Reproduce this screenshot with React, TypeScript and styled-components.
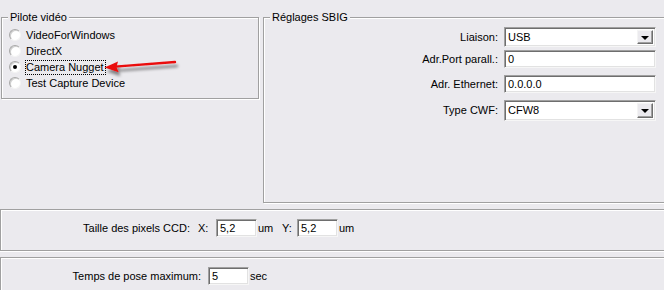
import React from 'react'
import styled, { createGlobalStyle } from 'styled-components'

const GlobalStyle = createGlobalStyle`
  html, body {
    margin: 0;
    padding: 0;
    background: #ebeaee;
  }
  body {
    font-family: 'Liberation Sans', Arial, sans-serif;
    font-size: 11px;
    color: #000;
  }
`

const Window = styled.div`
  position: relative;
  width: 664px;
  height: 290px;
  overflow: hidden;
  background: #ebeaee;
  font-family: 'Liberation Sans', Arial, sans-serif;
  font-size: 11px;
  line-height: 13px;
`

const TopRow = styled.div`
  display: flex;
  align-items: flex-start;
  padding-top: 17px;
`

interface GroupProps {
  $w: number
  $h: number
  $ml: number
}

const Group = styled.div<GroupProps>`
  position: relative;
  flex: none;
  box-sizing: border-box;
  width: ${({ $w }) => $w}px;
  height: ${({ $h }) => $h}px;
  margin-left: ${({ $ml }) => $ml}px;
  border: 1px solid #a0a0a0;
  box-shadow: inset 1px 1px 0 #fff, 1px 1px 0 #fff;
`

const Caption = styled.span`
  position: absolute;
  top: -7px;
  left: 6px;
  padding: 0 2px;
  line-height: 13px;
  background: #ebeaee;
  white-space: nowrap;
`

const RadioList = styled.div`
  display: flex;
  flex-direction: column;
  padding: 9px 0 0 7px;
`

const RadioRow = styled.label`
  display: flex;
  align-items: center;
  height: 16px;
  gap: 4px;
`

const RadioCircle = styled.span<{ $checked?: boolean }>`
  position: relative;
  box-sizing: border-box;
  width: 12px;
  height: 12px;
  border-radius: 50%;
  background: #fff;
  border: 1px solid;
  border-color: #a8a8a8 #f4f4f4 #f4f4f4 #a8a8a8;
  box-shadow: inset 1px 1px 0 #d0d0d0;
  &::after {
    content: '';
    display: ${({ $checked }) => ($checked ? 'block' : 'none')};
    position: absolute;
    left: 3px;
    top: 3px;
    width: 4px;
    height: 4px;
    border-radius: 50%;
    background: #000;
  }
`

const RadioText = styled.span<{ $focus?: boolean }>`
  border: 1px ${({ $focus }) => ($focus ? 'dotted #000' : 'solid transparent')};
  padding: 0 1px 0 0;
  line-height: 13px;
  white-space: nowrap;
`

const FormGrid = styled.div`
  display: grid;
  grid-template-columns: 234px 152px;
  column-gap: 6px;
  align-items: center;
  padding-top: 9px;
`

const FormLabel = styled.span<{ $mt: number; $h: number }>`
  display: flex;
  align-items: center;
  justify-content: flex-end;
  height: ${({ $h }) => $h}px;
  margin-top: ${({ $mt }) => $mt}px;
  white-space: nowrap;
`

const Sunken = styled.div<{ $w: number; $h: number; $mt?: number }>`
  position: relative;
  box-sizing: border-box;
  display: flex;
  align-items: center;
  width: ${({ $w }) => $w}px;
  height: ${({ $h }) => $h}px;
  margin-top: ${({ $mt }) => $mt ?? 0}px;
  padding-left: 3px;
  background: #fff;
  border: 1px solid;
  border-color: #a0a0a0 #f6f6f6 #f6f6f6 #a0a0a0;
  box-shadow: inset 1px 1px 0 #6e6e6e, inset -1px -1px 0 #e2e2e2;
  white-space: nowrap;
`

const DropButton = styled.span`
  position: absolute;
  top: 2px;
  right: 2px;
  bottom: 2px;
  box-sizing: border-box;
  width: 16px;
  display: flex;
  align-items: center;
  justify-content: center;
  background: #ebeaee;
  border: 1px solid;
  border-color: #f4f4f4 #6e6e6e #6e6e6e #f4f4f4;
  box-shadow: inset -1px -1px 0 #a0a0a0;
  &::after {
    content: '';
    width: 0;
    height: 0;
    border-left: 4px solid transparent;
    border-right: 4px solid transparent;
    border-top: 4px solid #000;
    margin-top: 1px;
  }
`

const Panel = styled.div<{ $mt: number; $h: number }>`
  box-sizing: border-box;
  width: 700px;
  height: ${({ $h }) => $h}px;
  margin-top: ${({ $mt }) => $mt}px;
  border: 1px solid #a0a0a0;
  box-shadow: inset 1px 1px 0 #fff, 0 1px 0 #fff;
  padding-top: 9px;
`

const FieldRow = styled.div`
  display: flex;
  align-items: center;
  height: 18px;
`

const FieldLabel = styled.span<{ $w: number }>`
  box-sizing: border-box;
  width: ${({ $w }) => $w}px;
  padding-right: 7px;
  text-align: right;
  white-space: nowrap;
`

const Tag = styled.span<{ $w: number }>`
  box-sizing: border-box;
  width: ${({ $w }) => $w}px;
  padding-left: 1px;
  white-space: nowrap;
`

const ArrowMark = styled.svg`
  position: absolute;
  left: 95px;
  top: 50px;
  overflow: visible;
`

const radios = [
  { label: 'VideoForWindows' },
  { label: 'DirectX' },
  { label: 'Camera Nugget', checked: true },
  { label: 'Test Capture Device' },
]

const App = () => (
  <Window>
    <GlobalStyle />
    <TopRow>
      <Group $w={258} $h={82} $ml={1}>
        <Caption>Pilote vidéo</Caption>
        <RadioList>
          {radios.map((r) => (
            <RadioRow key={r.label}>
              <RadioCircle $checked={r.checked} />
              <RadioText $focus={r.checked}>{r.label}</RadioText>
            </RadioRow>
          ))}
        </RadioList>
      </Group>
      <Group $w={420} $h={186} $ml={4}>
        <Caption>Réglages SBIG</Caption>
        <FormGrid>
          <FormLabel $mt={0} $h={20}>Liaison:</FormLabel>
          <Sunken $w={152} $h={20}>
            USB
            <DropButton />
          </Sunken>
          <FormLabel $mt={3} $h={18}>Adr.Port parall.:</FormLabel>
          <Sunken $w={152} $h={18} $mt={3}>
            0
          </Sunken>
          <FormLabel $mt={7} $h={18}>Adr. Ethernet:</FormLabel>
          <Sunken $w={152} $h={18} $mt={7}>
            0.0.0.0
          </Sunken>
          <FormLabel $mt={7} $h={21}>Type CWF:</FormLabel>
          <Sunken $w={152} $h={21} $mt={7}>
            CFW8
            <DropButton />
          </Sunken>
        </FormGrid>
      </Group>
    </TopRow>

    <Panel $mt={6} $h={42}>
      <FieldRow>
        <FieldLabel $w={196}>Taille des pixels CCD:</FieldLabel>
        <Tag $w={19}>X:</Tag>
        <Sunken $w={41} $h={18}>5,2</Sunken>
        <Tag $w={24}>um</Tag>
        <Tag $w={16}>Y:</Tag>
        <Sunken $w={41} $h={18}>5,2</Sunken>
        <Tag $w={24}>um</Tag>
      </FieldRow>
    </Panel>

    <Panel $mt={6} $h={60}>
      <FieldRow>
        <FieldLabel $w={207}>Temps de pose maximum:</FieldLabel>
        <Sunken $w={41} $h={18}>5</Sunken>
        <Tag $w={24}>sec</Tag>
      </FieldRow>
    </Panel>

    <ArrowMark width="90" height="30" viewBox="0 0 90 30">
      <defs>
        <filter id="arrowShadow" x="-20%" y="-50%" width="140%" height="200%">
          <feGaussianBlur in="SourceAlpha" stdDeviation="1.6" />
          <feOffset dx="2" dy="4" result="blur" />
          <feComponentTransfer>
            <feFuncA type="linear" slope="0.45" />
          </feComponentTransfer>
          <feMerge>
            <feMergeNode />
            <feMergeNode in="SourceGraphic" />
          </feMerge>
        </filter>
      </defs>
      <g filter="url(#arrowShadow)">
        <line x1="80" y1="12" x2="20" y2="16.6" stroke="#ea1111" strokeWidth="2.4" strokeLinecap="round" />
        <polygon points="9.5,17.4 23,11.5 21.5,17 23.6,22.3" fill="#ea1111" />
      </g>
    </ArrowMark>
  </Window>
)

export default App
